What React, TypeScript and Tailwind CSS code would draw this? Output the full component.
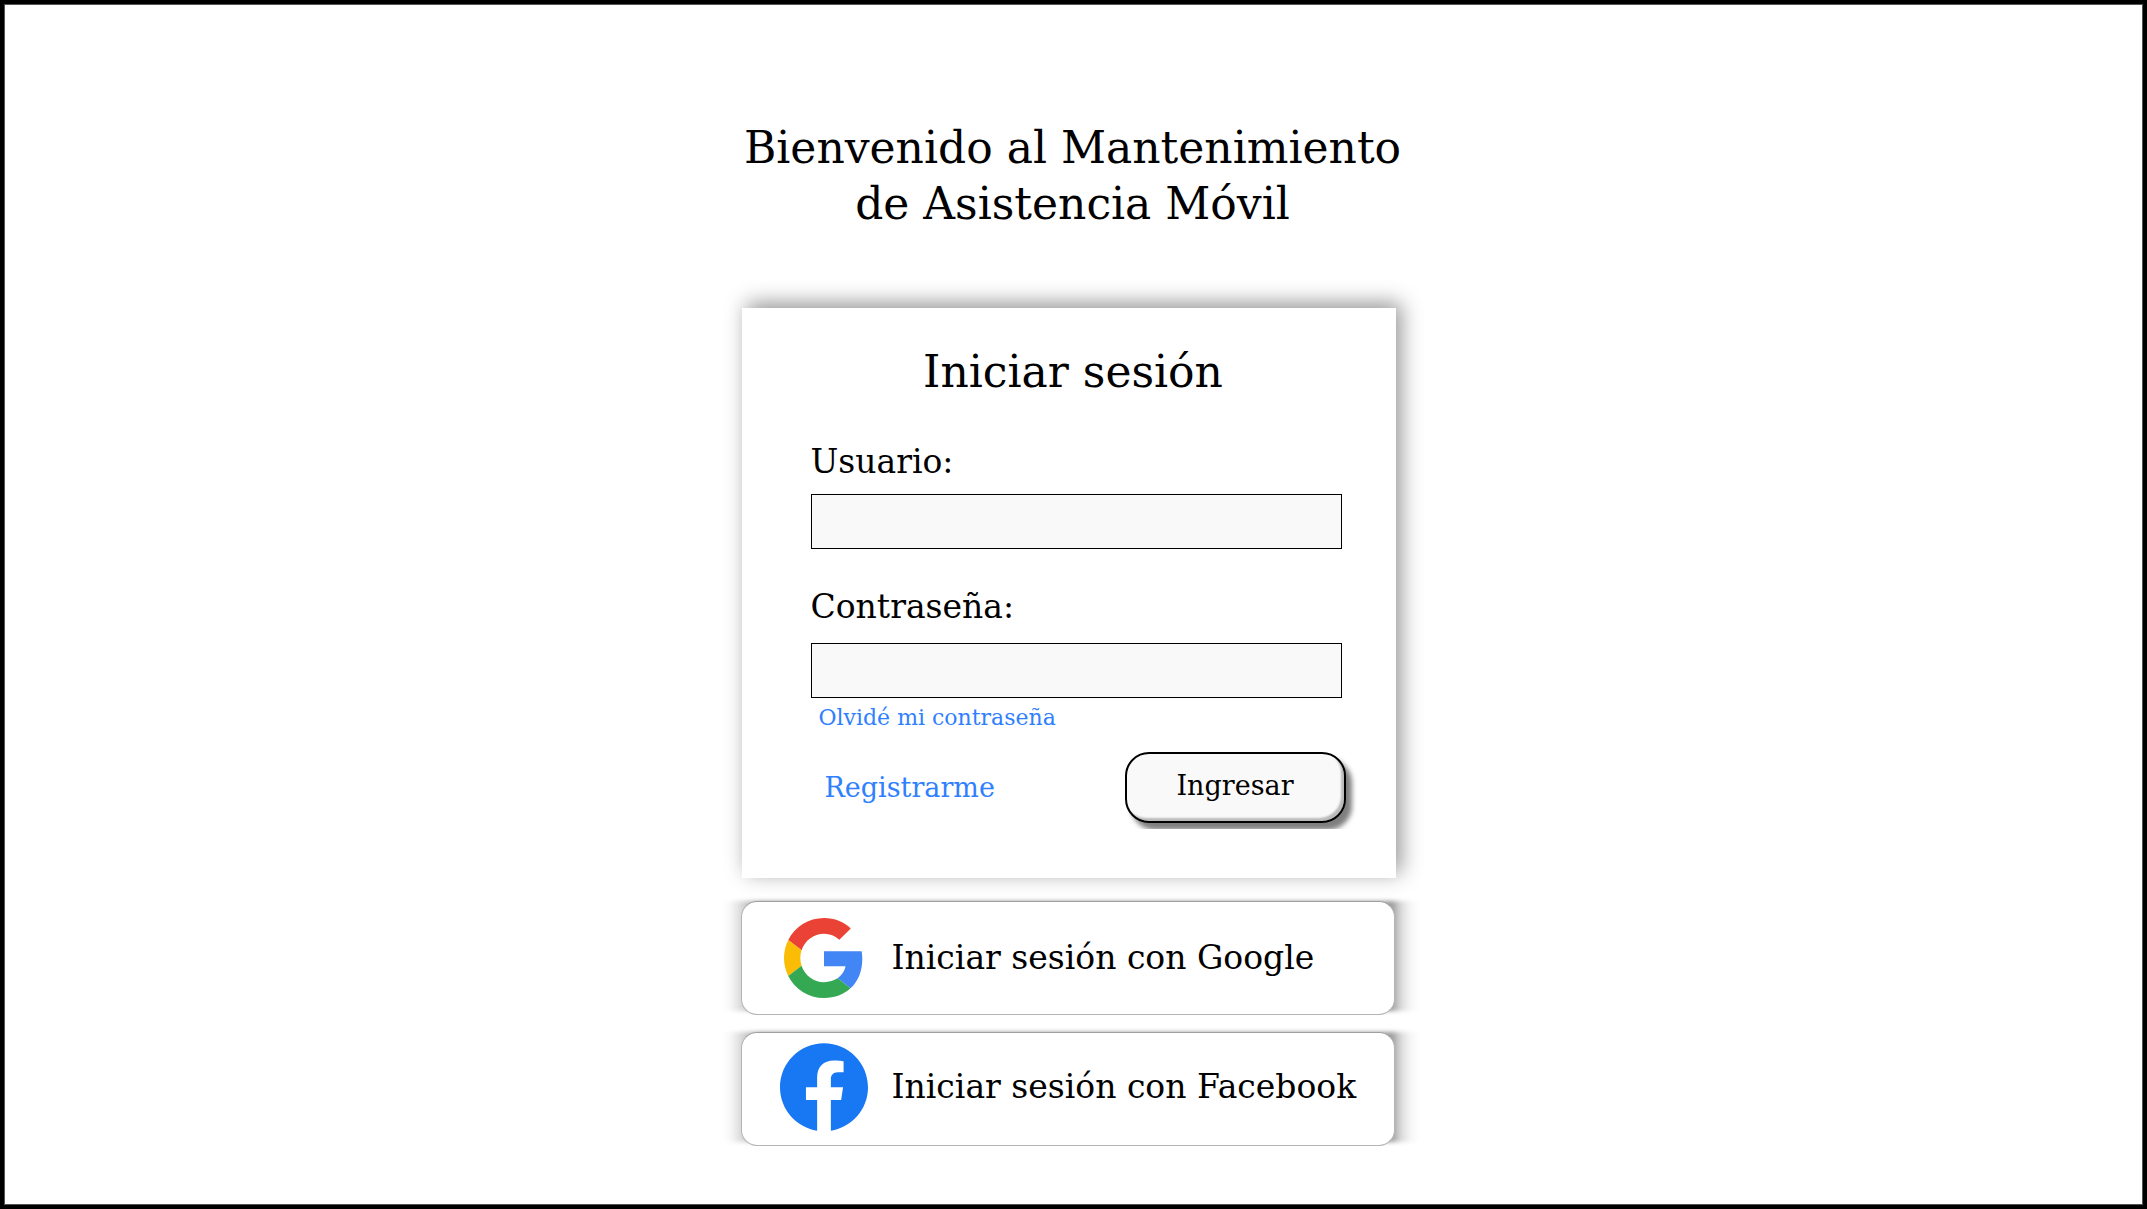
import type { ReactNode } from "react";

function GoogleLogo() {
  return (
    <svg viewBox="0 0 48 48" className="h-[80px] w-[80px]" aria-hidden="true">
      <path fill="#EA4335" d="M24 9.5c3.54 0 6.71 1.22 9.21 3.6l6.85-6.85C35.9 2.38 30.47 0 24 0 14.62 0 6.51 5.38 2.56 13.22l7.98 6.19C12.43 13.72 17.74 9.5 24 9.5z" />
      <path fill="#4285F4" d="M46.98 24.55c0-1.57-.15-3.09-.38-4.55H24v9.02h12.94c-.58 2.96-2.26 5.48-4.78 7.18l7.73 6c4.51-4.18 7.09-10.36 7.09-17.65z" />
      <path fill="#FBBC05" d="M10.53 28.59c-.48-1.45-.76-2.99-.76-4.59s.27-3.14.76-4.59l-7.98-6.19C.92 16.46 0 20.12 0 24c0 3.88.92 7.54 2.56 10.78l7.97-6.19z" />
      <path fill="#34A853" d="M24 48c6.48 0 11.93-2.13 15.89-5.81l-7.73-6c-2.15 1.45-4.92 2.3-8.16 2.3-6.26 0-11.57-4.22-13.47-9.91l-7.98 6.19C6.51 42.62 14.62 48 24 48z" />
    </svg>
  );
}

function FacebookLogo() {
  return (
    <svg viewBox="0 0 24 24" className="h-[88px] w-[88px]" aria-hidden="true">
      <path fill="#1877F2" d="M24 12.073c0-6.627-5.373-12-12-12s-12 5.373-12 12c0 5.99 4.388 10.954 10.125 11.854v-8.385H7.078v-3.47h3.047V9.43c0-3.007 1.792-4.669 4.533-4.669 1.312 0 2.686.235 2.686.235v2.953H15.83c-1.491 0-1.956.925-1.956 1.874v2.25h3.328l-.532 3.47h-2.796v8.385C19.612 23.027 24 18.062 24 12.073z" />
    </svg>
  );
}

function SocialButton({ icon, padding, children }: { icon: ReactNode; padding: string; children: ReactNode }) {
  return (
    <div className="relative isolate">
      {/* Side shadow: wide horizontal falloff, almost none vertically */}
      <span
        aria-hidden="true"
        className="absolute -inset-x-[25px] top-0 bottom-1 -z-10 bg-[linear-gradient(to_right,transparent_6px,rgba(0,0,0,0.03)_15px,rgba(0,0,0,0.14)_25px,rgba(0,0,0,0.4)_45px,rgba(0,0,0,0.4)_calc(100%-29px),rgba(0,0,0,0.14)_calc(100%-19px),rgba(0,0,0,0.04)_calc(100%-10px),transparent)] blur-[2px]"
      />
      <button
        type="button"
        className={`flex h-[114px] w-full items-center rounded-2xl border border-[#b4b4b4] border-t-[#a0a0a0] bg-white pl-9 text-left text-[33px] leading-10 ${padding}`}
      >
        <span className="flex w-[92px] shrink-0 justify-center">{icon}</span>
        <span className="ml-[22px] whitespace-nowrap">{children}</span>
      </button>
    </div>
  );
}

function Field({ id, label, type, gap }: { id: string; label: string; type: string; gap: string }) {
  return (
    <div className={`flex flex-col ${gap}`}>
      <label htmlFor={id} className="text-[33px] leading-10">
        {label}
      </label>
      <input id={id} type={type} className="h-[55px] w-full border border-black bg-[#f9f9f9] px-3 text-2xl outline-none" />
    </div>
  );
}

export default function App() {
  return (
    <div className="flex min-h-screen flex-col items-center border-4 border-black bg-white pt-[116px] font-['DejaVu_Serif',serif] text-black shadow-[inset_0_0_0_1px_#555]">
      <h1 className="pr-0.5 text-center text-[44px] leading-14">
        Bienvenido al Mantenimiento
        <br />
        de Asistencia Móvil
      </h1>

      <main className="mt-19 w-full max-w-[664px] pr-2.5">
        <form
          className="bg-white pt-9 pr-[50px] pb-[55px] pl-[69px] shadow-[5px_-5px_20px_rgba(0,0,0,0.42)]"
          onSubmit={(e) => e.preventDefault()}
        >
          <h2 className="pr-2.5 text-center text-[44px] leading-14">Iniciar sesión</h2>
          <div className="mt-[42px] flex flex-col gap-[38px] pr-1">
            <Field id="usuario" label="Usuario:" type="text" gap="gap-3" />
            <Field id="contrasena" label="Contraseña:" type="password" gap="gap-4" />
          </div>
          <a href="#olvide" className="ml-2 block w-fit text-[22px] leading-10 text-[#2f80ff]">
            Olvidé mi contraseña
          </a>
          <div className="mt-3.5 flex items-center justify-between">
            <a href="#registro" className="ml-3.5 text-[27px] leading-9 text-[#2f80ff]">
              Registrarme
            </a>
            <button
              type="submit"
              className="h-[71px] w-[221px] rounded-3xl border-2 border-black bg-[#f9f9f9] pb-1 text-[27px] leading-9 shadow-[6px_7px_5px_rgba(0,0,0,0.5),inset_-3px_-3px_2px_rgba(0,0,0,0.25)] [clip-path:inset(0_-14px_-6px_0)]"
            >
              Ingresar
            </button>
          </div>
        </form>

        <div className="-ml-px mt-[23px] mr-px flex flex-col gap-[17px]">
          <SocialButton icon={<GoogleLogo />} padding="pt-0">
            Iniciar sesión con Google
          </SocialButton>
          <SocialButton icon={<FacebookLogo />} padding="pb-1">
            Iniciar sesión con Facebook
          </SocialButton>
        </div>
      </main>
    </div>
  );
}
